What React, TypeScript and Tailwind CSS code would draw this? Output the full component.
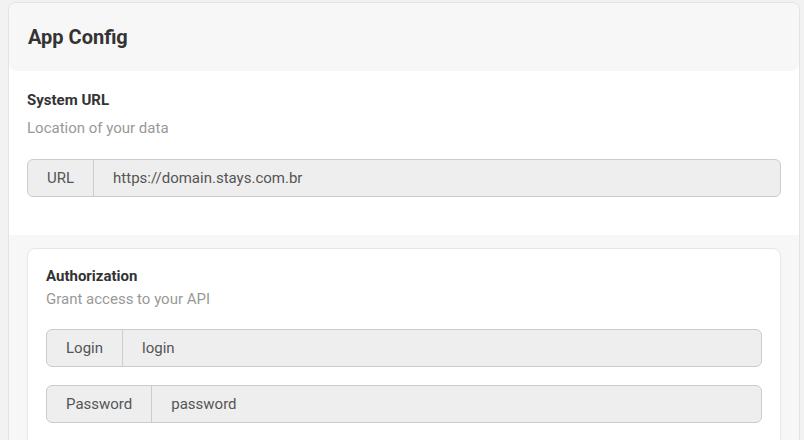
import React from "react";

type InputGroupProps = {
  label: string;
  value: string;
};

const InputGroup = ({ label, value }: InputGroupProps) => {
  return (
    <div className="flex h-[38px] w-full rounded-[6px] border border-[#cccccc] bg-[#eeeeee] text-[15px] text-[#555555]">
      <div className="flex items-center border-r border-[#cccccc] px-[19px]">{label}</div>
      <div className="flex flex-1 items-center px-[19px]">{value}</div>
    </div>
  );
};

const App = () => {
  return (
    <div className="h-[440px] w-[804px] overflow-hidden bg-[#f2f2f2] pt-[2px] pl-[8px] font-['Roboto',sans-serif]">
      <div className="w-[792px] h-[480px] rounded-[8px] border border-[#e3e3e3] bg-white">
        {/* cabeçalho */}
        <div className="flex h-[68px] items-center rounded-[8px] bg-[#f7f7f7] pl-[19px]">
          <h1 className="text-[20px] font-bold text-[#333333]">App Config</h1>
        </div>

        {/* url do sistema */}
        <div className="px-[18px] pt-[19px] pb-[38px]">
          <h2 className="text-[15px] leading-[20px] font-bold text-[#333333]">System URL</h2>
          <p className="mt-[8px] text-[15px] leading-[20px] text-[#999999]">Location of your data</p>
          <div className="mt-[21px]">
            <InputGroup label="URL" value="https://domain.stays.com.br" />
          </div>
        </div>

        {/* autorização */}
        <div className="h-[300px] bg-[#f7f7f7] px-[18px] pt-[13px]">
          <div className="h-[260px] rounded-[8px] border border-[#e6e6e6] bg-white px-[18px] pt-[17px]">
            <h2 className="text-[15px] leading-[20px] font-bold text-[#333333]">Authorization</h2>
            <p className="mt-[3px] text-[15px] leading-[20px] text-[#999999]">Grant access to your API</p>
            <div className="mt-[20px] flex flex-col gap-[18px]">
              <InputGroup label="Login" value="login" />
              <InputGroup label="Password" value="password" />
            </div>
          </div>
        </div>
      </div>
    </div>
  );
};

export default App;
